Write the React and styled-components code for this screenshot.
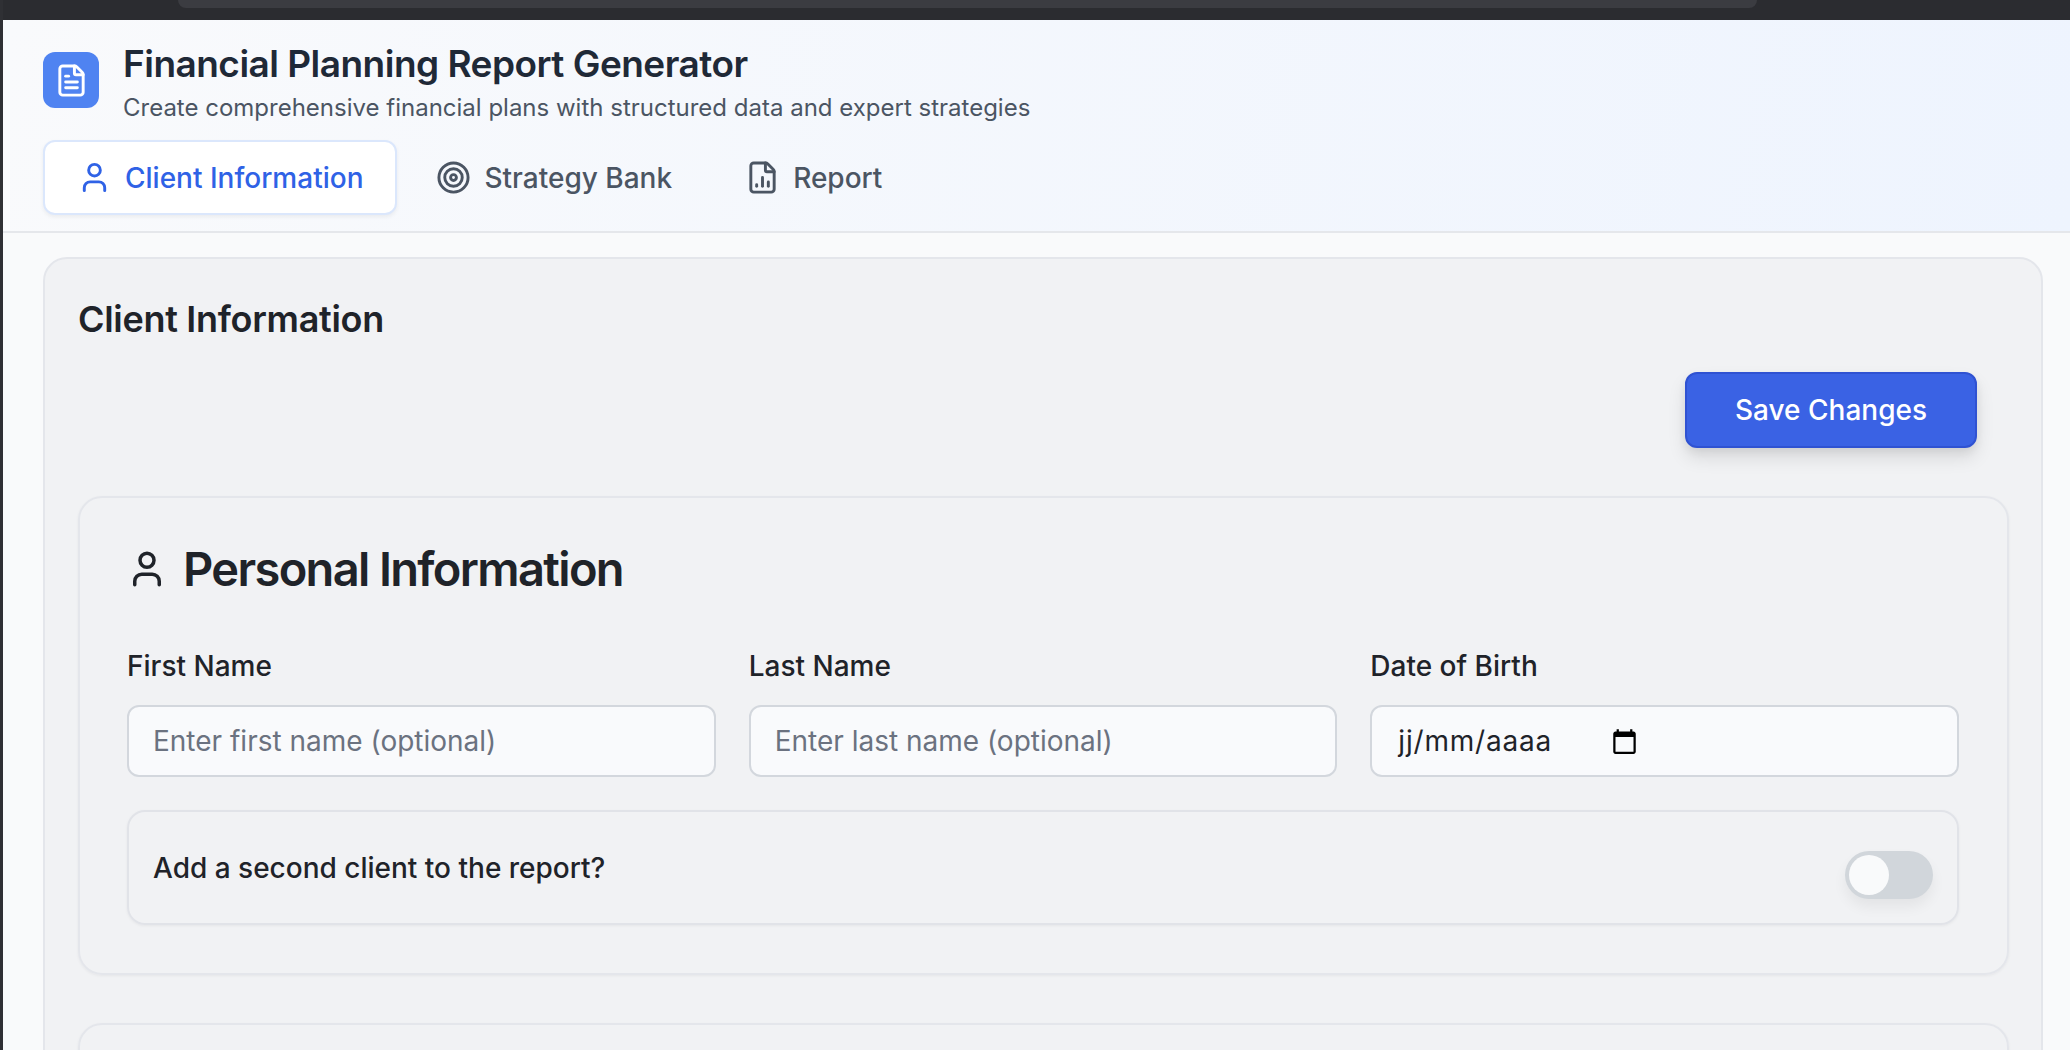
import React from 'react';
import styled, { createGlobalStyle } from 'styled-components';
import { User, Target, FileText, FileChartColumn } from 'lucide-react';

const GlobalStyle = createGlobalStyle`
    html, body {
        margin: 0;
        height: 100%;
        overflow: hidden;
    }
    body {
        font-family: Inter, "Liberation Sans", sans-serif;
        background: #f9fafb;
        color: #1f2937;
    }
    * {
        box-sizing: border-box;
    }
`

const Page = styled('div')`
    height: 1050px;
    overflow: hidden;
    border-left: 3px solid #2f3034;
    background: #f9fafb;
`

const BrowserBar = styled('div')`
    height: 20px;
    margin-left: -3px;
    padding: 0 313px 0 178px;
    background: #2b2c30;
    > div {
        height: 8px;
        background: #3b3c41;
        border-radius: 0 0 10px 10px;
    }
`

const Header = styled('header')`
    height: 213px;
    padding: 32px 0 0 40px;
    background: linear-gradient(100deg, #f9fafc 0%, #eef4fe 100%);
    border-bottom: 2px solid #e5e7eb;
`

const Brand = styled('div')`
    display: flex;
    align-items: flex-start;
    gap: 24px;
`

const Logo = styled('div')`
    width: 56px;
    height: 56px;
    display: flex;
    align-items: center;
    justify-content: center;
    background: #4f83f1;
    border-radius: 12px;
    color: #fff;
`

const BrandText = styled('div')`
    margin-top: -10px;
    h1 {
        margin: 0;
        font-size: 37px;
        line-height: 44px;
        font-weight: 600;
        letter-spacing: -0.52px;
        color: #1f2937;
    }
    p {
        margin: 4px 0 0;
        font-size: 24px;
        line-height: 35px;
        color: #4b5563;
    }
`

const Tabs = styled('nav')`
    display: flex;
    gap: 5px;
    margin-top: 15px;
`

const Tab = styled('button')`
    height: 75px;
    padding: 0 32px;
    display: flex;
    align-items: center;
    gap: 13px;
    font-family: inherit;
    font-size: 28px;
    font-weight: 500;
    color: ${p => p.$active ? '#2f62e6' : '#4b5563'};
    background: ${p => p.$active ? '#ffffff' : 'transparent'};
    border: 2px solid ${p => p.$active ? '#dbe7fc' : 'transparent'};
    border-radius: 12px;
    box-shadow: ${p => p.$active ? '0 2px 4px rgba(0,0,0,0.06)' : 'none'};
`

const Main = styled('main')`
    padding: 24px 27px 0 40px;
`

const Card = styled('section')`
    background: #f1f2f4;
    border: 2px solid #e4e6eb;
    border-radius: 24px;
    padding: 39px 32px 0 33px;
`

const CardTitle = styled('h2')`
    margin: 0;
    font-size: 36px;
    line-height: 42px;
    font-weight: 600;
    letter-spacing: -0.3px;
    color: #1f2329;
`

const Actions = styled('div')`
    display: flex;
    justify-content: flex-end;
    margin-top: 32px;
    padding-right: 32px;
`

const SaveButton = styled('button')`
    width: 292px;
    height: 76px;
    font-family: inherit;
    font-size: 28px;
    font-weight: 500;
    color: #fff;
    background: #3a62e4;
    border: 2px solid #2f52d2;
    border-radius: 12px;
    box-shadow: 0 10px 18px rgba(0,0,0,0.1), 0 4px 8px rgba(0,0,0,0.06);
`

const Section = styled('div')`
    margin-top: ${p => p.$gap}px;
    padding: 50px 48px 48px 47px;
    border: 2px solid #e4e6eb;
    border-radius: 24px;
    box-shadow: 0 1px 3px rgba(0,0,0,0.05);
    min-height: 120px;
`

const SectionTitle = styled('h3')`
    margin: 0;
    display: flex;
    align-items: center;
    gap: 15px;
    font-size: 47px;
    line-height: 42px;
    font-weight: 600;
    letter-spacing: -1.65px;
    color: #1f2329;
    svg {
        margin-left: -1px;
    }
`

const FieldGrid = styled('div')`
    display: grid;
    grid-template-columns: repeat(3, 1fr);
    gap: 33px;
    margin-top: 59px;
`

const Field = styled('div')`
    display: flex;
    flex-direction: column;
    gap: 22px;
`

const Label = styled('label')`
    font-size: 28px;
    line-height: 34px;
    font-weight: 500;
    color: #1f2329;
`

const TextInput = styled('input')`
    width: 100%;
    height: 72px;
    padding: 0 24px;
    font-family: inherit;
    font-size: 28px;
    color: #1f2329;
    background: #f9fafc;
    border: 2px solid #d3d7dd;
    border-radius: 12px;
    outline: none;
    &::placeholder {
        color: #6b7280;
        opacity: 1;
    }
`

const DateBox = styled('div')`
    height: 72px;
    padding: 0 26px;
    display: flex;
    align-items: center;
    gap: 59px;
    font-size: 28px;
    letter-spacing: 0.8px;
    color: #1f2329;
    background: #f9fafc;
    border: 2px solid #d3d7dd;
    border-radius: 12px;
`

const ToggleRow = styled('div')`
    height: 115px;
    margin-top: 33px;
    padding: 0 24px;
    display: flex;
    align-items: center;
    justify-content: space-between;
    border: 2px solid #e1e3e8;
    border-radius: 18px;
    box-shadow: 0 1px 3px rgba(0,0,0,0.05);
    font-size: 28px;
    font-weight: 500;
    color: #1f2329;
`

const Track = styled('div')`
    width: 88px;
    height: 48px;
    margin-top: 14px;
    padding: 4px;
    background: #d1d6db;
    border-radius: 24px;
    box-shadow: 0 8px 14px rgba(0,0,0,0.06);
`

const Knob = styled('div')`
    width: 40px;
    height: 40px;
    border-radius: 50%;
    background: #f9fafb;
`

const CalendarIcon = () => (
    <svg width="27" height="27" viewBox="0 0 24 24" fill="#000">
        <path d="M20 3h-1V1h-2v2H7V1H5v2H4c-1.1 0-2 .9-2 2v16c0 1.1.9 2 2 2h16c1.1 0 2-.9 2-2V5c0-1.1-.9-2-2-2zm0 18H4V8h16v13z" />
    </svg>
)

const App = () => {
    return (
        <Page>
            <GlobalStyle />
            <BrowserBar><div /></BrowserBar>
            <Header>
                <Brand>
                    <Logo><FileText size={35} /></Logo>
                    <BrandText>
                        <h1>Financial Planning Report Generator</h1>
                        <p>Create comprehensive financial plans with structured data and expert strategies</p>
                    </BrandText>
                </Brand>
                <Tabs>
                    <Tab $active><User size={35} />Client Information</Tab>
                    <Tab><Target size={35} />Strategy Bank</Tab>
                    <Tab><FileChartColumn size={35} />Report</Tab>
                </Tabs>
            </Header>
            <Main>
                <Card>
                    <CardTitle>Client Information</CardTitle>
                    <Actions>
                        <SaveButton>Save Changes</SaveButton>
                    </Actions>
                    <Section $gap={48}>
                        <SectionTitle><User size={42} />Personal Information</SectionTitle>
                        <FieldGrid>
                            <Field>
                                <Label>First Name</Label>
                                <TextInput placeholder="Enter first name (optional)" />
                            </Field>
                            <Field>
                                <Label>Last Name</Label>
                                <TextInput placeholder="Enter last name (optional)" />
                            </Field>
                            <Field>
                                <Label>Date of Birth</Label>
                                <DateBox>jj/mm/aaaa<CalendarIcon /></DateBox>
                            </Field>
                        </FieldGrid>
                        <ToggleRow>
                            Add a second client to the report?
                            <Track><Knob /></Track>
                        </ToggleRow>
                    </Section>
                    <Section $gap={48} />
                </Card>
            </Main>
        </Page>
    )
}

export default App
